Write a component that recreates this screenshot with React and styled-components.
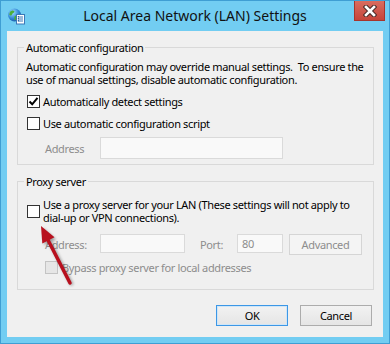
import React from "react";
import styled, { createGlobalStyle } from "styled-components";

const Global = createGlobalStyle`
  html, body { margin: 0; padding: 0; background: #ffffff; }
  body { font-family: "Noto Sans", "Open Sans", sans-serif; }
  * { box-sizing: border-box; }
`;

const Window = styled.div`
  position: relative;
  width: 390px;
  height: 344px;
  background: #72cdf2;
  border: 1px solid #3f9ed3;
  display: flex;
  flex-direction: column;
`;

const TitleBar = styled.div`
  height: 30px;
  display: grid;
  grid-template-columns: 1fr auto 1fr;
  align-items: start;
`;

const IconCell = styled.div`
  padding: 6px 0 0 6px;
`;

const Title = styled.div`
  font-size: 14px;
  letter-spacing: 0;
  line-height: 30px;
  color: #111;
  white-space: nowrap;
`;

const CloseButton = styled.div`
  justify-self: end;
  width: 31px;
  height: 20px;
  margin-right: 4px;
  background: linear-gradient(#d96d60, #c6443a);
  border: 1px solid #a7352c;
  border-top: none;
  display: flex;
  align-items: center;
  justify-content: center;
`;

const Client = styled.div`
  flex: 1;
  margin: 0 6px 6px 6px;
  background: #f0f0f0;
  padding: 10px 9px 0 10px;
  display: flex;
  flex-direction: column;
  font-size: 11px;
  letter-spacing: -0.35px;
  line-height: 13px;
  color: #000;
`;

const Group = styled.fieldset`
  margin: ${(p) => p.$top || 0}px 0 0 0;
  padding: ${(p) => p.$pt}px 8px ${(p) => p.$pb}px 8px;
  border: 1px solid #d9d9d9;
  min-width: 0;
`;

const Legend = styled.legend`
  padding: 0 2px;
  margin-left: -2px;
  font-size: 11px;
  line-height: 13px;
`;

const Description = styled.div`
  white-space: nowrap;
`;

const Row = styled.div`
  display: flex;
  align-items: ${(p) => p.$align || "center"};
  margin-top: ${(p) => p.$top || 0}px;
  padding-left: ${(p) => p.$indent || 0}px;
  min-height: 15px;
`;

const Box = styled.span`
  flex: none;
  width: 13px;
  height: 13px;
  margin-left: ${(p) => (p.$indent ? 0 : 1)}px;
  border: 1px solid ${(p) => (p.$disabled ? "#c4c4c4" : "#333333")};
  background: ${(p) => (p.$disabled ? "#e6e6e6" : "#ffffff")};
  display: flex;
  align-items: center;
  justify-content: center;
`;

const Label = styled.span`
  margin-left: ${(p) => p.$gap || 3}px;
  color: ${(p) => (p.$disabled ? "#8d8d8d" : "#000")};
  white-space: nowrap;
`;

const FieldLabel = styled.span`
  flex: none;
  width: ${(p) => p.$w}px;
  margin-left: ${(p) => p.$ml || 0}px;
  color: #8d8d8d;
  white-space: nowrap;
  align-self: center;
`;

const TextBox = styled.div`
  flex: none;
  width: ${(p) => p.$w}px;
  height: ${(p) => p.$h}px;
  border: 1px solid #dadada;
  background: #f9f9f9;
  color: #8d8d8d;
  padding-left: 4px;
  display: flex;
  align-items: center;
`;

const DisabledButton = styled.div`
  flex: none;
  width: 73px;
  height: 21px;
  margin-left: 6px;
  border: 1px solid #d5d5d5;
  background: #f4f4f4;
  color: #8d8d8d;
  display: flex;
  align-items: center;
  justify-content: center;
`;

const ButtonRow = styled.div`
  display: flex;
  justify-content: flex-end;
  gap: 12px;
  margin: 15px 2px 0 0;
`;

const Button = styled.div`
  width: 72px;
  height: 21px;
  border: 1px solid ${(p) => (p.$default ? "#3c97e6" : "#acacac")};
  background: linear-gradient(#f2f2f2, #e5e5e5);
  box-shadow: ${(p) => (p.$default ? "inset 0 0 0 1px #cfe6f8" : "none")};
  color: #000;
  display: flex;
  align-items: center;
  justify-content: center;
`;

const Overlay = styled.svg`
  position: absolute;
  left: -1px;
  top: -1px;
  pointer-events: none;
`;

const AppIcon = () => (
  <svg width="18" height="18" viewBox="0 0 18 18">
    <defs>
      <radialGradient id="gl" cx="0.35" cy="0.3" r="0.8">
        <stop offset="0" stopColor="#9fdcff" />
        <stop offset="0.6" stopColor="#2d86d4" />
        <stop offset="1" stopColor="#17509a" />
      </radialGradient>
    </defs>
    <circle cx="7.5" cy="8" r="6.5" fill="url(#gl)" />
    <path d="M3 5 C4.5 3 6.5 3 7.5 4.5 C7 6 5.5 6 5 7.5 C4.5 9 3 8.5 2.2 7.5 Z" fill="#4caf3a" />
    <path d="M8 9 C9.5 8.5 11 9.5 10.5 11.5 C9.5 13 8.5 13.5 7.5 12.5 C7.5 11 7 10 8 9 Z" fill="#4caf3a" />
    <rect x="9.5" y="7.5" width="8" height="9.5" fill="#ffffff" stroke="#3b78b8" strokeWidth="1" />
    <path d="M11 10h5M11 12h5M11 14h5" stroke="#3b78b8" strokeWidth="1" />
    <path d="M10.8 9.7h1M10.8 11.7h1M10.8 13.7h1" stroke="#1a4f8f" strokeWidth="1.2" />
  </svg>
);

const CloseGlyph = () => (
  <svg width="14" height="12" viewBox="0 0 14 12">
    <path d="M3 2 L11 10 M11 2 L3 10" stroke="#4a2a28" strokeWidth="4.6" strokeLinecap="square" />
    <path d="M3 2 L11 10 M11 2 L3 10" stroke="#ffffff" strokeWidth="2.6" strokeLinecap="square" />
  </svg>
);

const Check = () => (
  <svg width="11" height="11" viewBox="0 0 11 11">
    <path d="M1.5 5.5 L4.2 8.3 L9.5 1.8" fill="none" stroke="#000" strokeWidth="2" />
  </svg>
);

export default function App() {
  return (
    <>
      <Global />
      <Window>
        <TitleBar>
          <IconCell>
            <AppIcon />
          </IconCell>
          <Title>Local Area Network (LAN) Settings</Title>
          <CloseButton>
            <CloseGlyph />
          </CloseButton>
        </TitleBar>
        <Client>
          <Group $pt={6} $pb={5}>
            <Legend>Automatic configuration</Legend>
            <Description>
              Automatic configuration may override manual settings.&nbsp; To ensure the
              <br />
              use of manual settings, disable automatic configuration.
            </Description>
            <Row $top={8}>
              <Box>
                <Check />
              </Box>
              <Label>Automatically detect settings</Label>
            </Row>
            <Row $top={7}>
              <Box />
              <Label>Use automatic configuration script</Label>
            </Row>
            <Row $top={6} $indent={19}>
              <FieldLabel $w={55}>Address</FieldLabel>
              <TextBox $w={183} $h={22} />
            </Row>
          </Group>
          <Group $top={10} $pt={10} $pb={14}>
            <Legend>Proxy server</Legend>
            <Row>
              <Box />
              <Label>
                Use a proxy server for your LAN (These settings will not apply to
                <br />
                dial-up or VPN connections).
              </Label>
            </Row>
            <Row $top={10} $indent={19} $align="flex-start">
              <FieldLabel $w={55}>Address:</FieldLabel>
              <TextBox $w={85} $h={19} />
              <FieldLabel $w={37} $ml={15}>
                Port:
              </FieldLabel>
              <TextBox $w={46} $h={19}>
                80
              </TextBox>
              <DisabledButton>Advanced</DisabledButton>
            </Row>
            <Row $top={5} $indent={19}>
              <Box $disabled $indent />
              <Label $disabled $gap={4}>
                Bypass proxy server for local addresses
              </Label>
            </Row>
          </Group>
          <ButtonRow>
            <Button $default>OK</Button>
            <Button>Cancel</Button>
          </ButtonRow>
        </Client>
        <Overlay width="390" height="344" viewBox="0 0 390 344">
          <defs>
            <filter id="sh" x="-50%" y="-50%" width="200%" height="200%">
              <feGaussianBlur stdDeviation="1.5" />
            </filter>
          </defs>
          <g opacity="0.35" filter="url(#sh)" transform="translate(2,2)">
            <line x1="70" y1="283" x2="48" y2="240" stroke="#000" strokeWidth="3.5" />
            <polygon points="41,226 54,237.5 42.4,243.2" fill="#000" />
          </g>
          <line x1="70" y1="283" x2="48" y2="240" stroke="#b8101e" strokeWidth="3.5" strokeLinecap="round" />
          <polygon points="41,226 54.5,237.2 42.3,243.6" fill="#b8101e" />
        </Overlay>
      </Window>
    </>
  );
}
